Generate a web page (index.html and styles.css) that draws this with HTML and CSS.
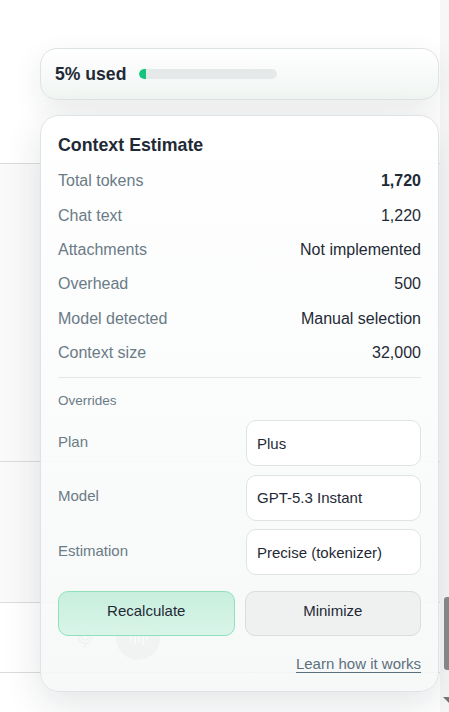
FILE: index.html
```html
<!DOCTYPE html>
<html lang="en">
<head>
<meta charset="utf-8">
<title>Context Estimate</title>
<link rel="stylesheet" href="styles.css">
</head>
<body>
<div class="page">
  <div class="main">
    <div class="band band-top"></div>
    <div class="band band-a"></div>
    <div class="band band-b"></div>
    <div class="composer">
      <svg class="mic" width="16" height="22" viewBox="0 0 16 22" fill="none" stroke="#a9aeb0" stroke-width="1.6" stroke-linecap="round">
        <rect x="4.5" y="1" width="7" height="12" rx="3.5"/>
        <path d="M1.5 10a6.5 6.5 0 0 0 13 0"/>
        <path d="M8 16.5V20"/>
      </svg>
      <div class="voice">
        <svg width="20" height="16" viewBox="0 0 20 16" stroke="#ffffff" stroke-width="2" stroke-linecap="round">
          <path d="M3 6v4M7 3v10M11 5v6M15 2v12M19 6v4"/>
        </svg>
      </div>
    </div>
  </div>
  <div class="scrolltrack">
    <div class="thumb"></div>
    <div class="arrow"></div>
  </div>
</div>

<div class="widget">
  <div class="pill">
    <span class="pill-text">5% used</span>
    <div class="bar"><div class="bar-fill" style="width:7px"></div></div>
  </div>

  <div class="panel">
    <h2 class="title">Context Estimate</h2>
    <div class="rows">
      <div class="row"><span class="label">Total tokens</span><span class="value strong">1,720</span></div>
      <div class="row"><span class="label">Chat text</span><span class="value">1,220</span></div>
      <div class="row"><span class="label">Attachments</span><span class="value">Not implemented</span></div>
      <div class="row"><span class="label">Overhead</span><span class="value">500</span></div>
      <div class="row"><span class="label">Model detected</span><span class="value">Manual selection</span></div>
      <div class="row"><span class="label">Context size</span><span class="value">32,000</span></div>
    </div>
    <div class="divider"></div>
    <div class="section">Overrides</div>
    <div class="overrides">
      <div class="orow"><span class="olabel">Plan</span><div class="field">Plus</div></div>
      <div class="orow"><span class="olabel">Model</span><div class="field">GPT-5.3 Instant</div></div>
      <div class="orow"><span class="olabel">Estimation</span><div class="field">Precise (tokenizer)</div></div>
    </div>
    <div class="actions">
      <button class="btn btn-primary">Recalculate</button>
      <button class="btn btn-secondary">Minimize</button>
    </div>
    <div class="footer"><a class="link" href="#">Learn how it works</a></div>
  </div>
</div>
</body>
</html>
```

FILE: styles.css
```css
* { box-sizing: border-box; }

html, body {
  margin: 0;
  padding: 0;
  width: 449px;
  height: 712px;
  overflow: hidden;
  background: #ffffff;
  font-family: "Liberation Sans", Arial, sans-serif;
  color: #1f2a36;
}

.page {
  display: flex;
  width: 449px;
  height: 712px;
}

.main {
  flex: 1;
  display: flex;
  flex-direction: column;
}

.band {
  border-bottom: 1px solid #dcdcdc;
}
.band-top { height: 164px; }
.band-a { height: 298px; background: #fafafa; }
.band-b { height: 141px; background: #fafafa; }

.composer {
  height: 70px;
  border-bottom: 1px solid #dcdcdc;
  display: flex;
  align-items: center;
  padding-left: 77px;
  gap: 23px;
}

.mic { display: block; }

.voice {
  width: 44px;
  height: 44px;
  border-radius: 50%;
  background: #b9bdbe;
  display: flex;
  align-items: center;
  justify-content: center;
}

.scrolltrack {
  width: 9px;
  background: #f7f7f7;
  position: relative;
}

.thumb {
  position: absolute;
  left: 4px;
  top: 597px;
  width: 8px;
  height: 73px;
  border-radius: 3px;
  background: #8a8a8a;
}

.arrow {
  position: absolute;
  left: 3px;
  top: 697px;
  width: 0;
  height: 0;
  border-left: 6px solid transparent;
  border-top: 6px solid #777;
}

.widget {
  position: absolute;
  left: 40px;
  top: 48px;
  width: 399px;
  display: flex;
  flex-direction: column;
  gap: 15px;
}

.pill {
  height: 52px;
  border: 1px solid #dde2e4;
  border-radius: 17px;
  background: linear-gradient(180deg, #ffffff 0%, #f0f5f2 100%);
  box-shadow: 0 10px 30px rgba(20, 30, 40, 0.09);
  display: flex;
  align-items: center;
  padding-left: 14px;
  gap: 13px;
}

.pill-text {
  font-size: 17.6px;
  font-weight: 700;
  color: #1f2a36;
}

.bar {
  width: 138px;
  height: 10px;
  border-radius: 5px;
  background: #e6e9ea;
  overflow: hidden;
}

.bar-fill {
  height: 100%;
  background: #12c57c;
  border-radius: 5px 0 0 5px;
}

.panel {
  height: 577px;
  border: 1px solid #e0e3e5;
  border-radius: 19px;
  background: linear-gradient(180deg, rgba(255,255,255,0.97) 0%, rgba(246,248,248,0.9) 100%);
  box-shadow: 0 12px 38px rgba(20, 30, 40, 0.12);
  padding: 18px 17px 0 17px;
  display: flex;
  flex-direction: column;
}

.title {
  margin: 0;
  font-size: 17.8px;
  line-height: 22px;
  font-weight: 700;
  color: #1f2a36;
}

.rows {
  margin-top: 8px;
  display: flex;
  flex-direction: column;
}

.row {
  height: 34.4px;
  display: flex;
  align-items: center;
  justify-content: space-between;
  font-size: 16px;
}

.label { color: #6a7b86; }
.value { color: #1f2a36; }
.value.strong { font-weight: 700; }

.divider {
  margin-top: 6.5px;
  height: 1px;
  background: #e4e7e9;
}

.section {
  margin-top: 15px;
  font-size: 13.5px;
  line-height: 16px;
  color: #6a7b86;
}

.overrides {
  margin-top: 11.5px;
  display: flex;
  flex-direction: column;
  gap: 8.5px;
}

.orow {
  display: flex;
  align-items: center;
  justify-content: space-between;
}

.olabel {
  font-size: 15px;
  color: #6a7b86;
  padding-bottom: 4px;
}

.field {
  width: 175px;
  height: 46px;
  border: 1px solid #dfe3e6;
  border-radius: 10px;
  background: #ffffff;
  display: flex;
  align-items: center;
  padding-left: 10px;
  font-size: 15px;
  color: #1f2a36;
}

.actions {
  margin-top: 15.5px;
  display: flex;
  gap: 10px;
}

.btn {
  flex: 1;
  height: 45px;
  border-radius: 10px;
  font-family: "Liberation Sans", Arial, sans-serif;
  font-size: 15px;
  color: #1f2a36;
  padding: 0 0 6px 0;
  cursor: pointer;
}

.btn-primary {
  border: 1px solid #8fe1be;
  background: linear-gradient(180deg, rgba(196,238,219,0.93) 0%, rgba(214,244,231,0.9) 100%);
}

.btn-secondary {
  border: 1px solid #d9dddf;
  background: #eff1f1;
}

.footer {
  margin-top: 19px;
  display: flex;
  justify-content: flex-end;
}

.link {
  font-size: 15px;
  line-height: 18px;
  color: #5c707c;
  text-decoration: underline;
  text-decoration-color: #5c707c;
  text-underline-offset: 3px;
}
```
